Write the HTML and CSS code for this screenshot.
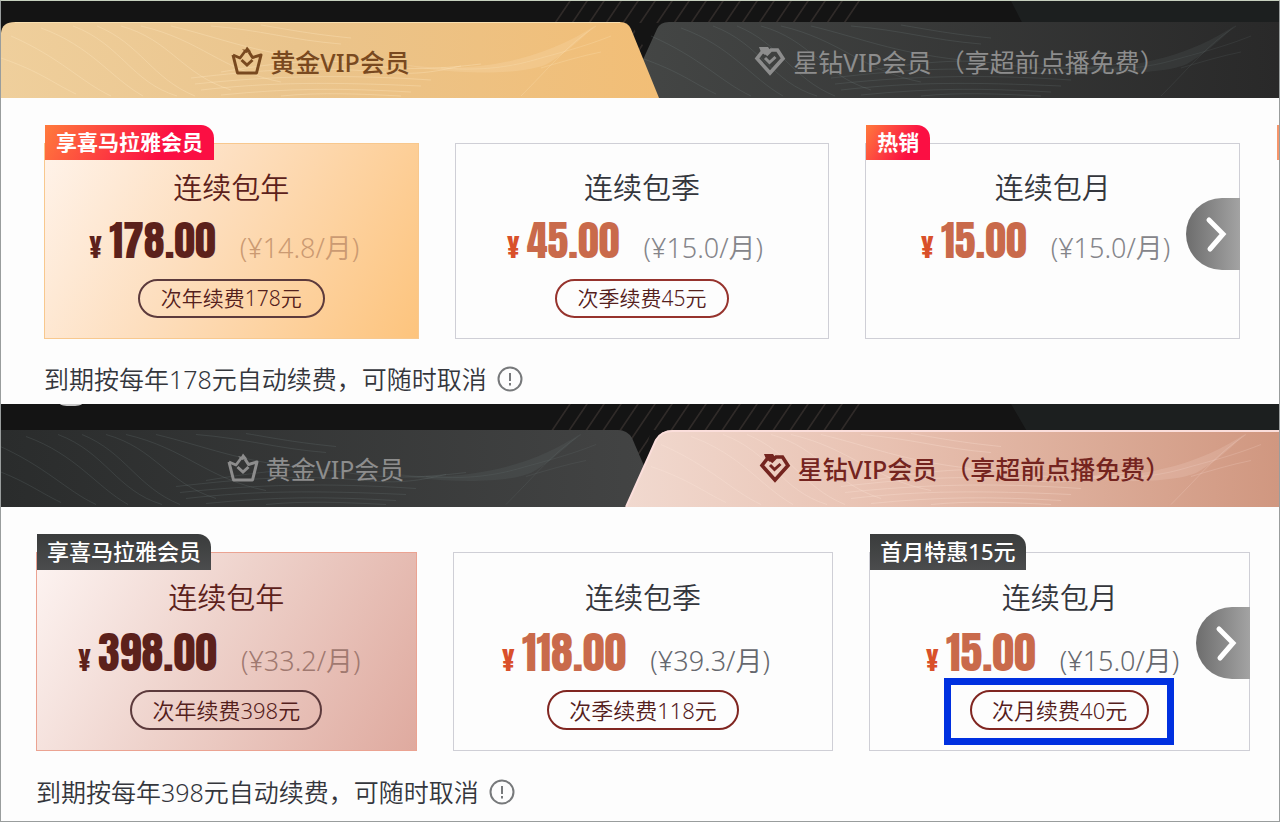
FILE: index.html
```html
<!DOCTYPE html>
<html lang="zh-CN">
<head>
  <meta charset="UTF-8">
  <meta name="viewport" content="width=device-width, initial-scale=1.0">
  <title>VIP会员</title>
  <link rel="stylesheet" href="styles.css">
</head>
<body>
  <svg class="defs" aria-hidden="true">
    <defs>
      <linearGradient id="goldFill"><stop offset="0" stop-color="#efcf9c"/><stop offset="0.45" stop-color="#eac48c"/><stop offset="1" stop-color="#f2be76"/></linearGradient>
      <linearGradient id="roseFill"><stop offset="0" stop-color="#f1d9cf"/><stop offset="0.4" stop-color="#e8c1b1"/><stop offset="1" stop-color="#d09780"/></linearGradient>
      <linearGradient id="greyLeft"><stop offset="0" stop-color="#2a2c2c"/><stop offset="1" stop-color="#434444"/></linearGradient>
      <linearGradient id="greyRight"><stop offset="0" stop-color="#444645"/><stop offset="1" stop-color="#292929"/></linearGradient>
      <pattern id="stripes" width="17" height="30" patternUnits="userSpaceOnUse" patternTransform="skewX(-34)">
        <path d="M8 0V30" stroke="#4a403c" stroke-width="1"/>
      </pattern>
    </defs>
    <symbol id="crown" viewBox="0 0 32 30">
      <path d="M2 9L6.500 27H25.500L30 9L21.500 11.500L18 6" fill="none" stroke="currentColor" stroke-width="3" stroke-linejoin="round"/>
      <path d="M2 9L9 12L15 4" fill="none" stroke="currentColor" stroke-width="2.800" stroke-linejoin="round"/>
      <path d="M11 3L14 4L16 0.500L20 5.500L15 7Z" fill="currentColor"/>
      <path d="M10.500 14L16 19L21.500 14" fill="none" stroke="currentColor" stroke-width="3"/>
    </symbol>
    <symbol id="diamond" viewBox="0 0 32 30">
      <path d="M12 9L17 4H23.500L29 12.500L16 27L3 12.500L8 6" fill="none" stroke="currentColor" stroke-width="3.600"/>
      <path d="M5 1H14L16 4L11 9L7 6Z" fill="currentColor"/>
      <path d="M11 12L15.500 16.500L21.500 11" fill="none" stroke="currentColor" stroke-width="3"/>
    </symbol>
    <symbol id="waves" viewBox="0 0 640 76">
      <g fill="none" stroke="currentColor">
        <path d="M20 36C60 50 70 60 95 72M30 14C80 36 100 60 130 74M60 6C110 24 130 56 162 74M92 4C140 22 150 60 196 74M116 4C160 22 170 56 214 74M140 4C190 18 200 52 250 68M160 4C220 18 240 48 300 60M190 4C240 16 270 30 340 38M230 4C280 8 310 18 360 22M280 3C310 8 330 12 370 16"/>
        <path d="M210 56C280 48 330 44 400 50C440 54 460 48 480 44M214 62C290 54 360 52 450 58M220 68C290 60 350 60 440 64M240 73C310 66 360 66 430 70M300 74C340 70 380 72 420 74M240 50C300 40 340 36 380 42C420 48 450 48 500 42"/>
        <path d="M540 74C570 44 585 24 615 4M560 46C580 40 600 34 620 30M460 46C510 50 540 42 560 36C590 28 610 22 630 14" stroke-opacity="0.700"/>
      </g>
      <path d="M400 38C470 54 550 46 615 3C595 22 580 34 566 42C540 54 460 54 400 38Z" fill="currentColor" fill-opacity="0.600"/>
    </symbol>
  </svg>

  <main>
    <section class="panel gold">
      <header class="panel-head">
        <svg class="head-art" viewBox="0 0 1278 97" preserveAspectRatio="none" aria-hidden="true">
          <rect width="1278" height="97" fill="#141414"/>
          <path d="M1010 0H1278V97H1060Z" fill="#1c1f1f"/>
          <path d="M560 0H870L855 22H630L650 60H600L540 22Z" fill="url(#stripes)"/>
          <path d="M635 97V74L656 28Q659 21 668 21H1278V97Z" fill="url(#greyRight)"/>
          <use class="waves-grey" href="#waves" x="620" y="21" width="640" height="76"/>
          <path d="M0 97V32Q1 21 14 21H619Q627 21 630 28L658 97Z" fill="url(#goldFill)"/>
          <path d="M14 21.500H619" stroke="#f8dfb0" stroke-width="1"/>
          <use class="waves-gold" href="#waves" x="-20" y="21" width="640" height="76"/>
        </svg>
        <div class="tabs" role="tablist">
          <button class="tab active" role="tab" aria-selected="true"><svg class="tab-icon" aria-hidden="true"><use href="#crown"/></svg>黄金VIP会员</button>
          <button class="tab" role="tab" aria-selected="false"><svg class="tab-icon" aria-hidden="true"><use href="#diamond"/></svg>星钻VIP会员<span>（享超前点播免费）</span></button>
        </div>
      </header>
      <div class="panel-body">
        <div class="plans">
          <article class="plan selected">
            <span class="badge">享喜马拉雅会员</span>
            <h2>连续包年</h2>
            <p class="price"><span class="yen">¥</span><strong>178.00</strong><span class="monthly">(¥14.8/月)</span></p>
            <span class="renew">次年续费178元</span>
          </article>
          <article class="plan">
            <h2>连续包季</h2>
            <p class="price"><span class="yen">¥</span><strong>45.00</strong><span class="monthly">(¥15.0/月)</span></p>
            <span class="renew">次季续费45元</span>
          </article>
          <article class="plan">
            <span class="badge">热销</span>
            <h2>连续包月</h2>
            <p class="price"><span class="yen">¥</span><strong>15.00</strong><span class="monthly">(¥15.0/月)</span></p>
            <button class="next" aria-label="下一页"><svg viewBox="0 0 54 72" aria-hidden="true"><path d="M23 22L37 36L24 51"/></svg></button>
          </article>
        </div>
        <p class="note">到期按每年178元自动续费，可随时取消
          <svg class="info" viewBox="0 0 26 26" aria-hidden="true"><circle cx="13" cy="13" r="11.500"/><path d="M13 7V15M13 17V19.500"/></svg>
        </p>
      </div>
    </section>

    <section class="panel rose">
      <header class="panel-head">
        <svg class="head-art" viewBox="0 0 1278 103" preserveAspectRatio="none" aria-hidden="true">
          <rect width="1278" height="103" fill="#141414"/>
          <path d="M1010 0H1278V103H1070Z" fill="#1c1f1f"/>
          <path d="M560 0H870L853 26H650L640 65H600L540 26Z" fill="url(#stripes)"/>
          <ellipse cx="70" cy="0" rx="11" ry="2" fill="#c8c8c8"/>
          <path d="M0 103V26H617Q626 26 631 34L650 78V103Z" fill="url(#greyLeft)"/>
          <use class="waves-grey" href="#waves" x="-35" y="26" width="640" height="77"/>
          <path d="M625 103L655 36Q660 26 672 26H1278V103Z" fill="url(#roseFill)"/>
          <use class="waves-rose" href="#waves" x="630" y="26" width="640" height="77"/>
          <path d="M625 103L655 36Q660 27 672 27H1278" fill="none" stroke="#fbdedb" stroke-width="2"/>
        </svg>
        <div class="tabs" role="tablist">
          <button class="tab" role="tab" aria-selected="false"><svg class="tab-icon" aria-hidden="true"><use href="#crown"/></svg>黄金VIP会员</button>
          <button class="tab active" role="tab" aria-selected="true"><svg class="tab-icon" aria-hidden="true"><use href="#diamond"/></svg>星钻VIP会员<span>（享超前点播免费）</span></button>
        </div>
      </header>
      <div class="panel-body">
        <div class="plans">
          <article class="plan selected">
            <span class="badge">享喜马拉雅会员</span>
            <h2>连续包年</h2>
            <p class="price"><span class="yen">¥</span><strong>398.00</strong><span class="monthly">(¥33.2/月)</span></p>
            <span class="renew">次年续费398元</span>
          </article>
          <article class="plan">
            <h2>连续包季</h2>
            <p class="price"><span class="yen">¥</span><strong>118.00</strong><span class="monthly">(¥39.3/月)</span></p>
            <span class="renew">次季续费118元</span>
          </article>
          <article class="plan">
            <span class="badge">首月特惠15元</span>
            <h2>连续包月</h2>
            <p class="price"><span class="yen">¥</span><strong>15.00</strong><span class="monthly">(¥15.0/月)</span></p>
            <span class="renew marked">次月续费40元</span>
            <button class="next" aria-label="下一页"><svg viewBox="0 0 54 72" aria-hidden="true"><path d="M23 22L37 36L24 51"/></svg></button>
          </article>
        </div>
        <p class="note">到期按每年398元自动续费，可随时取消
          <svg class="info" viewBox="0 0 26 26" aria-hidden="true"><circle cx="13" cy="13" r="11.500"/><path d="M13 7V15M13 17V19.500"/></svg>
        </p>
      </div>
    </section>
  </main>
</body>
</html>
```
FILE: styles.css
```css
* {
    box-sizing: border-box;
}

body {
    margin: 0;
    font-family: "Noto Sans", "Noto Sans CJK SC", sans-serif;
    background-color: #fdfdfd;
    color: #34363c;
}

h2, p {
    margin: 0;
    font-weight: 350;
}

button {
    font-family: inherit;
    border: none;
    padding: 0;
    cursor: pointer;
}

.defs {
    position: absolute;
    width: 0;
    height: 0;
}

main {
    border: 1px solid #999d9d;
    border-top-color: #c6d0be;
    overflow: hidden;
}

/* header with the two tabs */
.panel-head {
    position: relative;
    padding-top: 21px;
}
.rose .panel-head {
    padding-top: 26px;
}
.head-art {
    position: absolute;
    left: 0;
    top: 0;
    width: 100%;
    height: 100%;
}
.waves-gold {
    color: rgba(255, 235, 200, 0.3);
}
.waves-rose {
    color: rgba(255, 235, 225, 0.25);
}
.waves-grey {
    color: rgba(130, 145, 145, 0.18);
}
.tabs {
    position: relative;
    display: grid;
    grid-template-columns: 1fr 1fr;
}
.tab {
    display: flex;
    align-items: center;
    justify-content: center;
    height: 76px;
    padding-top: 2px;
    background: none;
    color: #8d8d8d;
    font-size: 25px;
    white-space: nowrap;
}
.tab span {
    margin-left: 8px;
}
.rose .tab {
    height: 77px;
    padding: 0 10px 2px 0;
}
.rose .tab.active {
    padding: 0 0 2px 10px;
}
.tab-icon {
    width: 32px;
    height: 30px;
    margin-right: 7px;
}
.tab.active {
    font-weight: 500;
    color: #79491f;
}
.rose .tab.active {
    color: #74241f;
}

/* plans */
.panel-body {
    position: relative;
    padding: 45px 39px 7px 43px;
}
.rose .panel-body {
    padding: 45px 29px 11px 35px;
}
/* edge of the badge on the next page of plans */
.gold .panel-body::after {
    content: "";
    position: absolute;
    right: 0;
    top: 27px;
    width: 2px;
    height: 35px;
    background-color: #f7966b;
}
.plans {
    display: grid;
    grid-template-columns: repeat(3, 1fr);
    gap: 36px;
}
.plan {
    position: relative;
    display: flex;
    flex-direction: column;
    align-items: center;
    padding: 23px 0 20px;
    border: 1px solid #cfcfd6;
}
.rose .plan {
    padding-top: 24px;
}
.gold .selected {
    border-color: #f8c88e;
    background: linear-gradient(120deg, #fff3ea 0%, #fddfc0 40%, #fdc47d 100%);
}
.rose .selected {
    border-color: #eba392;
    background: linear-gradient(120deg, #fdf4f2 0%, #eed2cb 45%, #dfaa9f 100%);
}
.plan h2 {
    font-size: 29px;
    line-height: 42px;
}
.selected h2 {
    color: #5c211b;
}

.badge {
    position: absolute;
    left: 0;
    top: -19px;
    height: 35px;
    padding: 0 11px;
    border-top-right-radius: 13px;
    background: linear-gradient(120deg, #ff7a3c, #fb0f43 70%);
    color: white;
    font-size: 21px;
    font-weight: 700;
    line-height: 34px;
    white-space: nowrap;
}
.rose .badge {
    height: 36px;
    padding: 0 10px;
    background: linear-gradient(#3a3c3c, #4b4c4d);
    font-size: 22px;
    font-weight: 500;
}

.price {
    display: flex;
    align-items: baseline;
    height: 50px;
    margin-top: 8px;
    padding-right: 14px;
    line-height: 48px;
    color: #c96a4b;
    white-space: nowrap;
}
.rose .price {
    margin-top: 9px;
}
.selected .price {
    color: #5c211b;
}
.price strong, .yen {
    font-family: Impact, Anton, "Liberation Sans", sans-serif;
    font-weight: 400;
}
.price strong {
    margin: 0 24px 0 7px;
    font-size: 42px;
}
.rose .price strong {
    font-size: 44px;
}
.yen {
    font-size: 28px;
    color: #d9502a;
}
.selected .yen {
    color: #5c211b;
}
.monthly {
    font-size: 27px;
    color: #85858a;
}
.gold .selected .monthly {
    color: #cb9a72;
}
.rose .monthly {
    color: #66686e;
}
.rose .selected .monthly {
    color: #a07970;
}

.renew {
    position: relative;
    height: 39px;
    margin-top: 12px;
    padding: 0 21px;
    border: 2px solid #96332d;
    border-radius: 20px;
    color: #54201c;
    font-size: 21px;
    font-weight: 350;
    line-height: 35px;
    white-space: nowrap;
}
.rose .renew {
    height: 40px;
    padding: 0 20px;
    border-color: #802621;
    font-size: 22px;
    line-height: 36px;
}
.selected .renew, .rose .selected .renew {
    border-color: #5c3a3c;
}
.marked::after {
    content: "";
    position: absolute;
    inset: -14px -27px -17px -28px;
    border: 7px solid #0030e0;
}

.next {
    position: absolute;
    right: -1px;
    top: 54px;
    width: 54px;
    height: 72px;
    border-radius: 36px 0 0 36px;
    background: linear-gradient(90deg, #6d6d6d, #a3a3a3);
}
.next svg {
    display: block;
    fill: none;
    stroke: white;
    stroke-width: 5;
    stroke-linecap: round;
}

.note {
    display: flex;
    align-items: center;
    gap: 10px;
    height: 36px;
    margin-top: 22px;
    font-size: 25px;
    line-height: 34px;
}
.rose .note {
    margin-top: 23px;
}
.info {
    width: 26px;
    height: 26px;
    fill: none;
    stroke: #77797b;
    stroke-width: 2;
}
```
